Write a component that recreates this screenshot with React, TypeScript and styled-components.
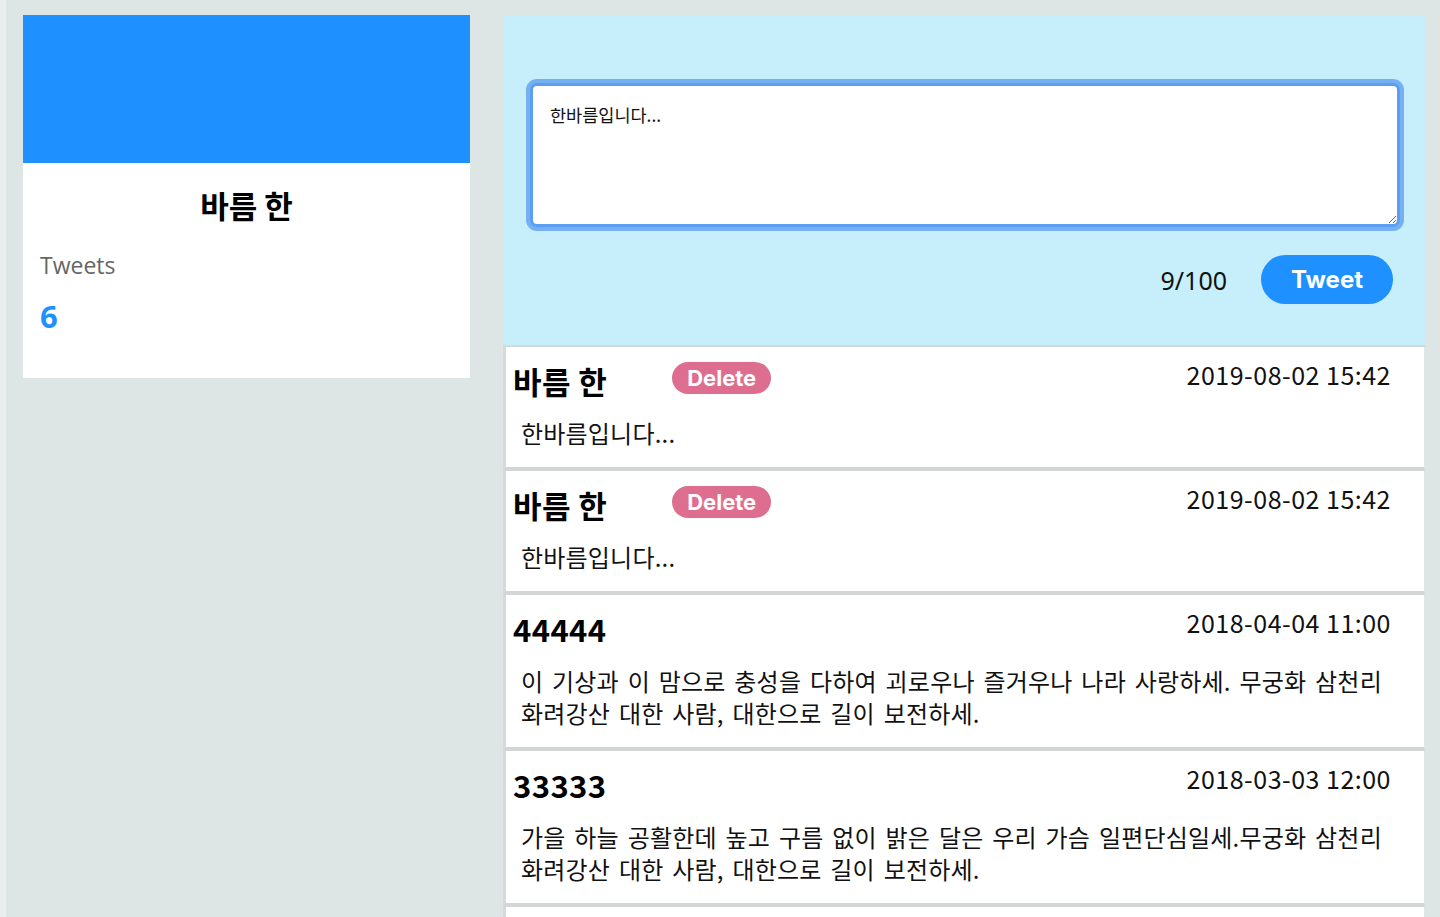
import React from "react";
import styled, { createGlobalStyle } from "styled-components";

const GlobalStyle = createGlobalStyle`
  html, body {
    margin: 0;
    padding: 0;
    background: #e9eeee;
  }
  body {
    font-family: "Noto Sans CJK KR", "Noto Sans", sans-serif;
    color: #111;
  }
  * { box-sizing: border-box; }
`;

const Page = styled.div`
  margin-left: 6px;
  min-height: 917px;
  background: #dde5e5;
  display: flex;
  align-items: flex-start;
  gap: 33px;
  padding: 15px 15px 0 17px;
`;

const ProfileCard = styled.section`
  width: 447px;
  height: 363px;
  background: #fff;
  display: flex;
  flex-direction: column;
`;

const Cover = styled.div`
  height: 148px;
  background: #1e90ff;
`;

const ProfileBody = styled.div`
  padding: 20px 17px 0;
  display: flex;
  flex-direction: column;
`;

const ProfileName = styled.h2`
  margin: 0;
  text-align: center;
  font-size: 31px;
  font-weight: 700;
  line-height: 44px;
  color: #000;
`;

const StatLabel = styled.div`
  margin-top: 23px;
  font-family: "Open Sans", "Noto Sans", sans-serif;
  font-size: 23px;
  line-height: 30px;
  color: #666;
`;

const StatValue = styled.div`
  margin-top: 18px;
  font-family: "Open Sans", "Noto Sans", sans-serif;
  font-size: 31px;
  font-weight: 700;
  line-height: 36px;
  color: #1e90ff;
`;

const Main = styled.main`
  width: 922px;
  display: flex;
  flex-direction: column;
`;

const Compose = styled.div`
  background: #c6eefb;
  height: 330px;
  padding: 68px 25px 0 27px;
  display: flex;
  flex-direction: column;
`;

const Input = styled.textarea`
  width: 870px;
  height: 144px;
  padding: 17px 17px;
  border: 3px solid #5a9ff2;
  border-radius: 7px;
  box-shadow: 0 0 0 4px rgba(90, 155, 240, 0.75);
  outline: none;
  background: #fff;
  font-family: "Noto Sans CJK KR", sans-serif;
  font-size: 17.5px;
  line-height: 24px;
  color: #111;
  resize: vertical;
`;

const ComposeFooter = styled.div`
  margin-top: 28px;
  padding-right: 7px;
  display: flex;
  justify-content: flex-end;
  align-items: center;
  gap: 34px;
`;

const Counter = styled.span`
  font-family: "Noto Sans", sans-serif;
  font-size: 25px;
  color: #111;
`;

const TweetButton = styled.button`
  width: 132px;
  height: 49px;
  border: none;
  border-radius: 25px;
  background: #1e90ff;
  color: #fff;
  font-family: Inter, "Noto Sans", sans-serif;
  font-size: 24px;
  font-weight: 700;
  cursor: pointer;
`;

const Feed = styled.ul`
  list-style: none;
  margin: 0;
  padding: 0;
  border-top: 2px solid #d3d8d8;
`;

const Item = styled.li`
  background: #fff;
  border-left: 3px solid #d6dada;
  border-right: 1px solid #e2e5e5;
  border-bottom: 4px solid #d3d6d6;
  padding: 14px 33px 18px 7px;
`;

const ItemHeader = styled.div`
  height: 40px;
  display: flex;
  align-items: center;
`;

const Author = styled.strong<{ $withDelete?: boolean }>`
  font-size: 31px;
  font-weight: 700;
  line-height: 40px;
  letter-spacing: 0.4px;
  color: #000;
  margin-right: ${(p) => (p.$withDelete ? "65px" : "0")};
`;

const DeleteButton = styled.button`
  height: 32px;
  width: 99px;
  margin-top: -6px;
  border: none;
  border-radius: 16px;
  background: #de6e8f;
  color: #fff;
  font-family: Inter, "Noto Sans", sans-serif;
  font-size: 22px;
  font-weight: 700;
  padding: 0;
  cursor: pointer;
`;

const Stamp = styled.time`
  margin-left: auto;
  font-size: 25px;
  letter-spacing: 0.5px;
  line-height: 32px;
  align-self: flex-start;
  margin-top: -3px;
  color: #111;
`;

const Body = styled.p`
  margin: 16px 0 0 8px;
  font-size: 24px;
  line-height: 32px;
  letter-spacing: 0.2px;
  word-spacing: 3.2px;
  word-break: keep-all;
  color: #111;
`;

type Tweet = { author: string; date: string; text: string; mine: boolean };

const tweets: Tweet[] = [
  { author: "바름 한", date: "2019-08-02 15:42", text: "한바름입니다...", mine: true },
  { author: "바름 한", date: "2019-08-02 15:42", text: "한바름입니다...", mine: true },
  {
    author: "44444",
    date: "2018-04-04 11:00",
    text: "이 기상과 이 맘으로 충성을 다하여 괴로우나 즐거우나 나라 사랑하세. 무궁화 삼천리 화려강산 대한 사람, 대한으로 길이 보전하세.",
    mine: false,
  },
  {
    author: "33333",
    date: "2018-03-03 12:00",
    text: "가을 하늘 공활한데 높고 구름 없이 밝은 달은 우리 가슴 일편단심일세.무궁화 삼천리 화려강산 대한 사람, 대한으로 길이 보전하세.",
    mine: false,
  },
  {
    author: "22222",
    date: "2018-02-02 10:00",
    text: "남산 위에 저 소나무 철갑을 두른 듯 바람 서리 불변함은 우리 기상일세.",
    mine: false,
  },
];

export default function App() {
  return (
    <>
      <GlobalStyle />
      <Page>
        <ProfileCard>
          <Cover />
          <ProfileBody>
            <ProfileName>바름 한</ProfileName>
            <StatLabel>Tweets</StatLabel>
            <StatValue>6</StatValue>
          </ProfileBody>
        </ProfileCard>
        <Main>
          <Compose>
            <Input defaultValue="한바름입니다..." />
            <ComposeFooter>
              <Counter>9/100</Counter>
              <TweetButton>Tweet</TweetButton>
            </ComposeFooter>
          </Compose>
          <Feed>
            {tweets.map((t, i) => (
              <Item key={i}>
                <ItemHeader>
                  <Author $withDelete={t.mine}>{t.author}</Author>
                  {t.mine && <DeleteButton>Delete</DeleteButton>}
                  <Stamp>{t.date}</Stamp>
                </ItemHeader>
                <Body>{t.text}</Body>
              </Item>
            ))}
          </Feed>
        </Main>
      </Page>
    </>
  );
}
